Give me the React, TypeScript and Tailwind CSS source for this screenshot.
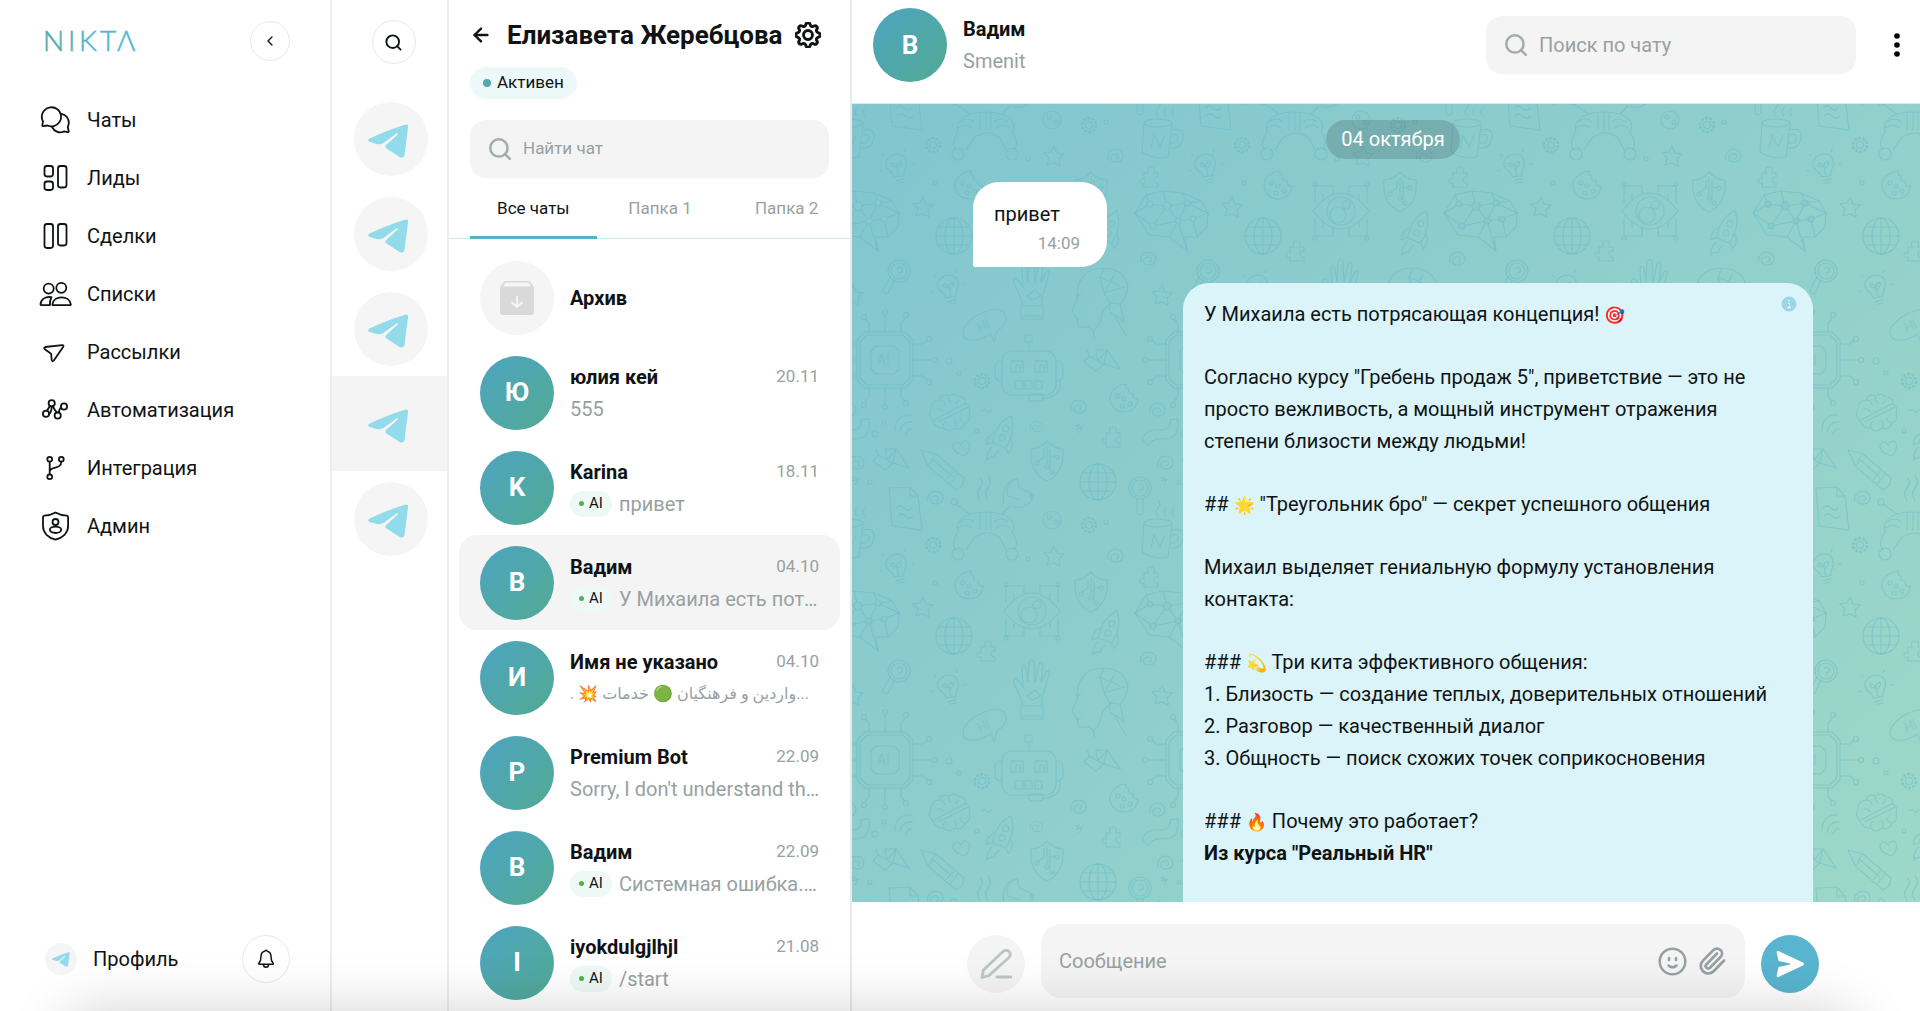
import type { ReactNode } from "react";
import { ArrowLeft, ChevronLeft, Paperclip, Search } from "lucide-react";
import { BsGear } from "react-icons/bs";

interface Chat {
  name: string;
  letter: string;
  date: string;
  text: string;
  ai?: boolean;
  active?: boolean;
  arabic?: boolean;
}

const CHATS: Chat[] = [
  { name: "юлия кей", letter: "Ю", date: "20.11", text: "555" },
  { name: "Karina", letter: "K", date: "18.11", text: "привет", ai: true },
  {
    name: "Вадим",
    letter: "В",
    date: "04.10",
    text: "У Михаила есть пот…",
    ai: true,
    active: true,
  },
  {
    name: "Имя не указано",
    letter: "И",
    date: "04.10",
    text: ". 💥 واردین و فرهنگیان 🟢 خدمات...",
    arabic: true,
  },
  {
    name: "Premium Bot",
    letter: "P",
    date: "22.09",
    text: "Sorry, I don't understand th…",
  },
  {
    name: "Вадим",
    letter: "В",
    date: "22.09",
    text: "Системная ошибка.…",
    ai: true,
  },
  { name: "iyokdulgjlhjl", letter: "I", date: "21.08", text: "/start", ai: true },
];

const CHANNELS = [
  { id: 1, active: false },
  { id: 2, active: false },
  { id: 3, active: false },
  { id: 4, active: true },
  { id: 5, active: false },
];

const TABS = ["Все чаты", "Папка 1", "Папка 2"];

function NavSvg({ children }: { children: ReactNode }) {
  return (
    <svg
      viewBox="0 0 30 30"
      className="h-[30px] w-[30px] overflow-visible"
      fill="none"
      stroke="currentColor"
      strokeWidth="1.8"
      strokeLinecap="round"
      strokeLinejoin="round"
      aria-hidden="true"
    >
      {children}
    </svg>
  );
}

const NAV = [
  {
    label: "Чаты",
    icon: (
      <NavSvg>
        <path d="M3.200 21.200C2.200 21.200 2 20.500 2.400 19.500L3 16.500C1.200 13 1.500 9 3.800 6 7 2 13 1 17 4 21.500 7 22.300 13 19.500 17 16.500 21.300 11.500 22.300 7.500 20.500z" />
        <path d="M21.500 8.800C26 9.500 29 13.500 28.800 18 28.700 20 28 21.300 27.800 22.200L28.700 26.200C28.800 27 28.300 27.400 27.500 27.200L24.300 26.400C19.500 28.500 14.500 27 12 22" />
      </NavSvg>
    ),
  },
  {
    label: "Лиды",
    icon: (
      <NavSvg>
        <rect x="4.5" y="3" width="8.5" height="10.5" rx="2.4" />
        <rect x="4.5" y="18.5" width="8.5" height="8.5" rx="2.4" />
        <rect x="18" y="3" width="8.5" height="21.5" rx="2.4" />
      </NavSvg>
    ),
  },
  {
    label: "Сделки",
    icon: (
      <NavSvg>
        <rect x="4.5" y="3" width="8.5" height="24" rx="2.4" />
        <rect x="18" y="3" width="8.5" height="21.5" rx="2.4" />
      </NavSvg>
    ),
  },
  {
    label: "Списки",
    icon: (
      <NavSvg>
        <circle cx="8.7" cy="9.6" r="5" />
        <circle cx="21.3" cy="8.8" r="5" />
        <path d="M11.5 18.2C5 17.2.6 20.6.5 25.4q0 .8.8.8h8.6c-.2-3 .2-5.600 1.600-8z" />
        <path d="M13.200 26.200h16.800q.9 0 .8-.9c-.6-4.300-4.500-7-9.200-7s-8.600 2.700-9.200 7q-.1.9.8.9z" />
      </NavSvg>
    ),
  },
  {
    label: "Рассылки",
    icon: (
      <NavSvg>
        <path d="M5.200 10 22.200 8.200q2-.1.9 1.700l-9.300 13.600q-1.600 1.800-2.100-.6l-.6-6.200-5.900-4.200q-2-2 0-2.500z" />
      </NavSvg>
    ),
  },
  {
    label: "Автоматизация",
    icon: (
      <NavSvg>
        <circle cx="6" cy="18.700" r="3.100" />
        <circle cx="11.700" cy="8.300" r="3.100" />
        <circle cx="17.700" cy="20.500" r="3.100" />
        <circle cx="24" cy="11.500" r="3.100" />
        <path d="M7 15.700 9.800 11M12.800 11.300 15 15.300q1.200 1 1.900 2.300M18.600 17.400q1.500-4.800 2.600-4.900M9 19q2.500-1 2.600-7.500" />
      </NavSvg>
    ),
  },
  {
    label: "Интеграция",
    icon: (
      <NavSvg>
        <circle cx="9.700" cy="6.300" r="2.400" />
        <circle cx="21.300" cy="6.300" r="2.400" />
        <circle cx="9.700" cy="23.800" r="2.400" />
        <path d="M9.700 8.700v12.700M21.300 8.700c0 8-11.600 4.500-11.600 9.800" />
      </NavSvg>
    ),
  },
  {
    label: "Админ",
    icon: (
      <NavSvg>
        <path d="M15.500 1.500c3.500 2 7.500 3 11.300 3.200q1.200.1 1.300 1.400v9c0 7-5.500 11.700-12.600 13.500C8.400 26.800 3 22.100 3 15.100v-9q0-1.300 1.300-1.400C8 4.500 12 3.500 15.500 1.500z" />
        <circle cx="15.500" cy="11" r="3" />
        <ellipse cx="15.500" cy="18.800" rx="5.700" ry="3.200" />
      </NavSvg>
    ),
  },
];

function TelegramIcon({ className }: { className: string }) {
  return (
    <svg viewBox="0 -1 122 102" className={className} fill="#92dbeb" aria-hidden="true">
      <path d="M3 43Q-3 48 3 52L25 59Q36 62 46 56L86 27Q92 25 88 31L54 62Q49 67 54 72L93 97Q106 104 109 92L120 6Q121-2 110 1Q50 20 3 43z" />
    </svg>
  );
}

function Avatar({ letter }: { letter: string }) {
  return (
    <div className="flex h-[74px] w-[74px] shrink-0 items-center justify-center rounded-full bg-linear-135 from-[#4ea4c0] to-[#52aa94] text-[26px] font-bold text-white">
      {letter}
    </div>
  );
}

function ChatRow({ chat }: { chat: Chat }) {
  return (
    <li>
      <button
        type="button"
        className={`flex h-[95px] w-full items-center gap-4 rounded-[18px] pr-4 pl-[21px] text-left ${chat.active ? "bg-[#f4f4f4]" : ""}`}
      >
        <Avatar letter={chat.letter} />
        <span className="flex min-w-0 flex-1 flex-col">
          <span className="flex h-8 items-center justify-between pr-[5px]">
            <span className="text-[20px] font-bold text-[#101314]">{chat.name}</span>
            <span className="text-[17px] text-[#98a1a2]">{chat.date}</span>
          </span>
          <span className="flex h-8 items-center gap-[7px]">
            {chat.ai && (
              <span className="flex h-[26px] shrink-0 items-center gap-[5px] rounded-full bg-[#edf8f7] px-[9px] text-[15px] text-[#101314]">
                <span className="h-[5px] w-[5px] rounded-full bg-[#4fb447]" />
                AI
              </span>
            )}
            <span
              className={`min-w-0 flex-1 truncate text-[#98a1a2] ${chat.arabic ? "text-[16px]" : "text-[20px]"}`}
            >
              {chat.text}
            </span>
          </span>
        </span>
      </button>
    </li>
  );
}

const STAR = "M0-10 3-3 10-2 5 3 6 10 0 7-7 9-5 2-10-3-3-4z";
const PUZZLE = "M-7-4h4q-2-6 3-6t3 6h4v4q-4 0-4 3t4 3v4H-7V6q-4 1-4-2t4-2z";
const SWIRL = "M-7 5C-9-3-2-8 4-5s5 12-3 12S-5-1 0-1s4 5 1 5";
const CLOUD = "M-18 2-13-4-4 1 5-10 18 9 2 4-6 11zM-13-4-15-10M-4 1-6-10 5-10M-4 1 2 4 5-10";

function Globe({ x, y }: { x: number; y: number }) {
  return (
    <g transform={`translate(${x} ${y})`}>
      <circle r="18" />
      <ellipse rx="9" ry="18" />
      <path d="M-18 0H18M0-18V18M-15-9H15M-15 9H15" />
    </g>
  );
}

function Cookie({ x, y }: { x: number; y: number }) {
  return (
    <g transform={`translate(${x} ${y})`}>
      <path d="M2-14Q-3-14-7-11-15-6-14 2-11 14 1 14 13 13 14 1 9 2 9-4 3-4 5-9 1-10 2-14z" />
      <circle cx="-6" cy="-2" r="2" />
      <circle cx="0" cy="1" r="2" />
      <circle cx="-2" cy="8" r="2" />
      <circle cx="6" cy="6" r="2" />
    </g>
  );
}

function Rocket({ x, y }: { x: number; y: number }) {
  return (
    <g transform={`translate(${x} ${y}) rotate(22)`}>
      <path d="M-7 8Q-11-12 0-24 11-12 7 8zM-6 12q-3 6 0 14 2-5 6-5-1-4 2-9M-8-3Q-15 3-12 12L-7 8M8-3Q15 3 12 12L7 8" />
      <circle cy="-10" r="3" />
      <circle cy="0" r="3" />
    </g>
  );
}

function Bulb({ x, y }: { x: number; y: number }) {
  return (
    <g transform={`translate(${x} ${y}) rotate(-12)`}>
      <path d="M-5 9Q-5 5-9 1-13-7-6-11 1-15 8-10 13-3 7 4 5 7 5 10zM-4 13H5M-3 16H4M0 9V0Q-8-2-4-5-1-4 0 0 1-5 5-5 6-1 0 2M-18 0h3M18 0h-3M-12-16l2 3M12-16l-2 3" />
    </g>
  );
}

function Shield({ x, y }: { x: number; y: number }) {
  return (
    <g transform={`translate(${x} ${y})`}>
      <path d="M0-20Q-7-12-16-12-18 12 0 20 18 12 16-12 7-12 0-20zM0-14V3M-3-12V-4L-9 0M3-12V8M3-4 9-5" />
      <circle cx="-10" cy="2" r="2" />
      <circle cx="10" cy="-4" r="2" />
      <circle cx="5" cy="11" r="2" />
      <circle cx="0" cy="6" r="2" />
    </g>
  );
}

function Cog({ x, y }: { x: number; y: number }) {
  return (
    <g transform={`translate(${x} ${y})`}>
      <circle r="3.500" />
      <circle r="7" strokeDasharray="3 1.400" strokeWidth="2.500" />
    </g>
  );
}

// one repeat of the doodle wallpaper, 309 x 400
function WallpaperTile() {
  return (
    <g>
      <g transform="translate(10 117)">
        <path d="M-36-8-25-26-8-30 12-28 30-20 37-8 36 6 26 16H14L16 30-2 16-22 14z" />
        <path d="M-36-8-21-17-4-15 16-18 37-8 22-2 7 0-18 5-36-8M-25-26-21-17M-8-30-4-15 7 0 16-18M-18 5-4-15M22-2 26 16M7 0-2 16M7 0 16 30M12-28 16-18 30-20" />
        <circle cx="-21" cy="-17" r="3" fill="#88c9cd" />
        <circle cx="-4" cy="-15" r="4" fill="#88c9cd" />
        <circle cx="16" cy="-18" r="3" fill="#88c9cd" />
        <circle cx="7" cy="0" r="3" fill="#88c9cd" />
        <circle cx="22" cy="-2" r="3" fill="#88c9cd" />
        <circle cx="-18" cy="5" r="3" fill="#88c9cd" />
      </g>
      <path d={STAR} transform="translate(71 103)" />
      <path d={STAR} transform="translate(1 191)" />
      <path d={STAR} transform="translate(202 52)" />
      <Globe x={102} y={132} />
      <Globe x={246} y={378} />
      {/* circuit eye */}
      <g transform="translate(180 107)">
        <path d="M-28 0Q0-36 28 0 0 36-28 0zM-26-8V-25H-8V-17M26-8V-25H8V-17M-26 8V25H-8V17M26 8V25H8V17M-18-10V-17M18-10V-17M-18 10V17M18 10V17" />
        <circle r="14" />
        <circle cx="-3" cy="4" r="8" />
        <circle cx="5" cy="-6" r="4" />
        <circle cx="-26" cy="-27" r="2" />
        <circle cx="26" cy="-27" r="2" />
        <circle cx="-26" cy="27" r="2" />
        <circle cx="26" cy="27" r="2" />
      </g>
      <Shield x={239} y={88} />
      <Shield x={195} y={357} />
      <Rocket x={256} y={129} />
      <Rocket x={150} y={334} />
      <path d={PUZZLE} transform="translate(136 147)" />
      <path d={PUZZLE} transform="translate(261 333)" />
      <path d={PUZZLE} transform="translate(299 73)" />
      {/* magnifiers */}
      <circle cx="47" cy="167" r="11" />
      <circle cx="47" cy="167" r="8" />
      <path d="M42 177 36 189Q31 191 31 186L38 173M45 165q3-4 5 0t-4 4" />
      <circle cx="288" cy="384" r="11" />
      <circle cx="288" cy="384" r="8" />
      <path d="M285 395V409Q288 413 291 409V395M286 382q3-4 5 0t-4 4" />
      <Bulb x={97} y={184} />
      <Bulb x={45} y={63} />
      {/* robot hand */}
      <g transform="translate(180 186)">
        <path d="M-11 29V16Q-9 12-12 6L-18-6Q-20-12-15-11L-9-3-10-22Q-8-27-6-22L-4-8-3-28Q0-33 2-28L3-8 7-26Q10-30 11-25L9-7 14-18Q18-21 17-16L12 2Q8 12 11 16V29zM-11 16H11M-11 26H11M-5 6 3 0 9 6 0 10z" />
      </g>
      {/* android head */}
      <g transform="translate(248 199)">
        <path d="M-6 35Q-4 27-12 24-24 26-22 17L-28 8-23-3Q-24-35 4-35 24-34 28-17 26-3 20 1L24 20Q18 12 12 11M4-35 0-26 20-17M0-26 4-10 28-17M-24-8h5M-24 16h5M-6 28Q2 18 2 10L10 0 20 1M10 0 4-10 14-28M14 11l12 22M10 0Q8 8 12 11" />
      </g>
      <path d={SWIRL} transform="translate(296 154)" />
      <path d={SWIRL} transform="translate(184 322) scale(.8)" />
      <path d={SWIRL} transform="translate(226 302)" />
      <path d={SWIRL} transform="translate(305 305)" />
      <path d={SWIRL} transform="translate(313 358)" />
      <path d={SWIRL} transform="translate(83 393)" />
      <path d={SWIRL} transform="translate(263 51)" />
      {/* chip */}
      <g transform="translate(33 256)">
        <path d="M-20-28H20L28-20V20L20 28H-20L-28 20V-20zM-18-25H18L25-18V18L18 25H-18L-25 18V-18z" />
        <path d="M-9-14H9L14-9V9L9 14H-9L-14 9V-9z" />
        <path d="M0-28V-45M-16-28V-37L-20-41M16-28V-37L20-41M0 28V45M-16 28V37L-20 41M16 28V37L20 41M28 0H46M28-16H38L42-20M28 16H38L42 20M-28 0H-46M-28-16H-38L-42-20M-28 16H-38L-42 20" />
        <circle cy="-48" r="2.500" />
        <circle cx="-21" cy="-43" r="2.500" />
        <circle cx="21" cy="-45" r="2.500" />
        <circle cy="47" r="2.500" />
        <circle cx="-21" cy="45" r="2.500" />
        <circle cx="21" cy="43" r="2.500" />
        <circle cx="49" cy="0" r="2.500" />
        <circle cx="44" cy="-21" r="2.500" />
        <circle cx="44" cy="22" r="2.500" />
        <circle cx="-49" cy="0" r="2.500" />
        <circle cx="-44" cy="-21" r="2.500" />
        <circle cx="-44" cy="22" r="2.500" />
        <text x="-8" y="5" fontSize="14" fontFamily="Roboto, sans-serif" strokeWidth=".6">
          AI
        </text>
      </g>
      {/* speech bubble */}
      <g transform="translate(132 221)">
        <path d="M10 17 7 9Q-12 20-20 12-24 2-8-9 12-20 20-13 26-2 13 6z" />
        <text
          x="-7"
          y="5"
          fontSize="13"
          fontFamily="Roboto, sans-serif"
          strokeWidth=".6"
          transform="rotate(-24)"
        >
          Hi
        </text>
      </g>
      {/* robot face */}
      <g transform="translate(177 269)">
        <rect x="-27" y="-22" width="54" height="44" rx="10" />
        <path d="M0-22V-31M-4-31h7v-7h-7zM-27-12q-7 0-7 6V2q0 6 7 6M27-12q7 0 7 6V2q0 6-7 6M31 7V14Q30 24 14 25M-18-12h12v11h-12zM6-12h12v11H6zM-13-2v-6h4v6M11-2v-6h4v6M-14 8h8v8h-8zM-4 8h7v8h-7zM6 8h7v8H6z" />
        <rect x="0" y="21" width="14" height="7" rx="3" />
      </g>
      <path d={CLOUD} transform="translate(250 256)" />
      <path d={CLOUD} transform="translate(39 355)" />
      <Cog x={130} y={277} />
      <Cog x={81} y={41} />
      <Cog x={237} y={21} />
      {/* brain */}
      <g transform="translate(98 308)">
        <path d="M-17 9Q-23 3-19-3-19-11-11-12-9-19-1-16 4-20 9-15 16-15 16-8 21-6 19 1 22 8 15 11 12 19 5 16-2 22-6 16-14 17-17 9zM-16 8 16-9M-12 10 18-5M-11-12q5 0 6 5M-1-16q-2 4 2 7M-14-2q5-3 7 2M5-8q4-2 3-5M-6 16q-2-4 2-7M5 16q3-4-1-8M15 11q-4 0-5-5" />
      </g>
      <path d="M43 327Q43 310 60 311M48 329Q49 317 61 318M54 331Q55 324 61 325M130 307q3-3 5 0t5-2" />
      <Cookie x={272} y={294} />
      <Cookie x={117} y={81} />
      {/* tube */}
      <path d="M290 335Q294 324 310 326 319 326 318 316L326 315Q328 334 314 335 300 333 296 342z" />
      {/* heart */}
      <path d="M112 352Q100 348 101 341 105 335 109 341 113 334 117 339 119 347 112 352z" />
      {/* pencil */}
      <path d="M69 346 84 350 112 374Q112 383 104 386L76 362zM84 350 80 355 79 359 76 362M106 370 98 380M102 366 94 376M80 355 101 373" />
      <path d="M223 322l4-1-2 4 5-2-3 6M308 374l4-1-2 4 5-2-3 6M128 396q-5-6 0-12t0-10M136 396q-5-6 0-12t0-12M306 12q-4-4 0-8t0-8M314 12q-4-4 0-8M322 12q-4-4 0-8" />
      {/* note */}
      <path d="M37-16 58-17 66-8 70 26 40 22zM58-17V-8H66M44 4q4-4 8 0t8 0M45 12q4-4 8 0t8 0" />
      {/* robot dog */}
      <g transform="translate(132 16)">
        <path d="M-28-16 -14-6Q0-10 18-6L26-14M-14-6Q-30 0-26 12-34 24-28 30M-10 18Q4 8 16 18M18-6Q34 0 28 12 36 24 30 30M-10 18-18 30M16 18 22 30M-4-8v18M2-8v18M7-8v18M-26 8q8-6 14 0M-24 2q8-6 14 0M26 8q-8-6-14 0M24 2q-8-6-14 0" />
        <path d="M20-16Q16-38 34-42 32-32 40-30 50-28 48-20 40-10 28-14M34-42Q20-36 24-24L36-20" />
        <circle cx="-30" cy="-18" r="3" />
        <circle cx="-26" cy="34" r="6" />
        <circle cx="28" cy="34" r="6" />
        <circle cx="48" cy="-24" r="2" />
      </g>
      {/* mug */}
      <g transform="translate(308 36)">
        <ellipse cx="-2" cy="-17" rx="14" ry="4" />
        <path d="M-16-17-18 12Q-6 20 8 17L12-15M12-10Q25-13 23-1 20 10 9 8M12-5Q19-7 18-1 17 4 10 3M-9 8-6-5 0 7 5-5" />
      </g>
      <circle cx="200" cy="16" r="9" />
      <circle cx="197" cy="13" r="2" />
      <circle cx="204" cy="18" r="2" />
      <circle cx="97" cy="257" r="3" />
      <circle cx="107" cy="269" r="2" />
      <circle cx="125" cy="327" r="2" />
      <circle cx="32" cy="318" r="2" />
      <circle cx="23" cy="330" r="3" />
      <circle cx="18" cy="378" r="2" />
      <circle cx="176" cy="55" r="2" />
      <circle cx="254" cy="18" r="2" />
      <circle cx="83" cy="79" r="2" />
    </g>
  );
}

function Wallpaper() {
  return (
    <svg className="absolute inset-0 h-full w-full" aria-hidden="true">
      <defs>
        <pattern id="doodles" width="309" height="400" patternUnits="userSpaceOnUse">
          <g fill="none" stroke="#5fb3c2" strokeWidth="1.200" strokeOpacity=".38">
            <WallpaperTile />
            {/* neighbours, so that shapes run over the tile edge */}
            <g transform="translate(309 0)">
              <WallpaperTile />
            </g>
            <g transform="translate(-309 0)">
              <WallpaperTile />
            </g>
            <g transform="translate(0 400)">
              <WallpaperTile />
            </g>
            <g transform="translate(0 -400)">
              <WallpaperTile />
            </g>
          </g>
        </pattern>
      </defs>
      <rect width="100%" height="100%" fill="url(#doodles)" />
    </svg>
  );
}

function Sidebar() {
  return (
    <aside className="flex w-[332px] shrink-0 flex-col border-r-2 border-[#ededed] pr-10">
      <div className="flex h-[91px] items-center justify-between pb-[10px] pl-[45px]">
        <a href="#" aria-label="NIKTA">
          <svg width="96" height="32" viewBox="0 -4 96 32" className="overflow-visible">
            <defs>
              <linearGradient id="brand" gradientUnits="userSpaceOnUse" x1="0" x2="50">
                <stop stopColor="#52ab9c" />
                <stop offset="1" stopColor="#4db6d3" />
              </linearGradient>
            </defs>
            <text
              x="-2 23 34 55 72"
              y="22"
              fill="url(#brand)"
              stroke="url(#brand)"
              strokeWidth=".5"
              fontFamily="Lato, sans-serif"
              fontWeight="300"
              fontSize="28"
            >
              NIKTΛ
            </text>
          </svg>
        </a>
        <button
          type="button"
          aria-label="Свернуть меню"
          className="flex h-10 w-10 items-center justify-center rounded-full border border-[#e9e9e9]"
        >
          <ChevronLeft className="h-4 w-4" />
        </button>
      </div>
      <nav className="flex flex-col pl-10">
        {NAV.map((item) => (
          <a key={item.label} href="#" className="flex h-[58px] items-center gap-[17px]">
            <span className="flex h-[30px] w-[30px] items-center justify-center">{item.icon}</span>
            <span className="text-[20px]">{item.label}</span>
          </a>
        ))}
      </nav>
      <div className="mt-auto mb-7 flex items-center justify-between pl-[45px]">
        <a href="#" className="flex items-center gap-4">
          <span className="flex h-8 w-8 items-center justify-center rounded-full bg-[#f5f5f5]">
            <TelegramIcon className="h-[15px] w-[18px]" />
          </span>
          <span className="text-[20px]">Профиль</span>
        </a>
        <button
          type="button"
          aria-label="Уведомления"
          className="flex h-12 w-12 items-center justify-center rounded-full border border-[#e9e9e9]"
        >
          <svg
            viewBox="0 0 18 20"
            className="h-5 w-[18px]"
            fill="none"
            stroke="currentColor"
            strokeWidth="1.500"
            strokeLinecap="round"
            strokeLinejoin="round"
          >
            <path d="M9 1.200c-.8 0-1 .8-1.300 1C5 2.800 4 5 4 7.500c0 3.500-.5 5-2 6.500-.6.700-.4 1.200.4 1.200h13.200c.8 0 1-.5.4-1.200-1.500-1.500-2-3-2-6.500 0-2.500-1-4.700-3.700-5.300-.3-.2-.5-1-1.300-1zM6.500 15.500c0 3.800 5 3.800 5 0" />
          </svg>
        </button>
      </div>
    </aside>
  );
}

function ChannelRail() {
  return (
    <div className="w-[117px] shrink-0 border-r-2 border-[#ededed]">
      <div className="flex h-[91px] items-center justify-center pb-[7px] pl-2">
        <button
          type="button"
          aria-label="Поиск"
          className="flex h-11 w-11 items-center justify-center rounded-full border border-[#e9e9e9]"
        >
          <Search className="h-[19px] w-[19px]" strokeWidth={2.4} />
        </button>
      </div>
      {CHANNELS.map((c) => (
        <button
          key={c.id}
          type="button"
          aria-label={`Telegram ${c.id}`}
          className={`flex h-[95px] w-full items-center justify-center pl-[3px] ${c.active ? "bg-[#f4f4f4]" : ""}`}
        >
          <span
            className={`flex h-[74px] w-[74px] items-center justify-center rounded-full pt-1 pr-[6px] ${c.active ? "" : "bg-[#f5f5f5]"}`}
          >
            <TelegramIcon className="h-[34px] w-[41px]" />
          </span>
        </button>
      ))}
    </div>
  );
}

function ChatList() {
  return (
    <section className="flex w-[403px] shrink-0 flex-col overflow-hidden border-r-2 border-[#e9e9e9]">
      <div className="flex h-[70px] shrink-0 items-center px-[21px]">
        <button type="button" aria-label="Назад" className="w-[37px] shrink-0">
          <ArrowLeft className="h-[22px] w-[22px]" strokeWidth={2.6} />
        </button>
        <h1 className="text-[26px] font-bold whitespace-nowrap">Елизавета Жеребцова</h1>
        <button type="button" aria-label="Настройки" className="ml-3 shrink-0">
          <BsGear className="h-[26px] w-[26px]" strokeWidth=".8" />
        </button>
      </div>
      <div className="px-[21px]">
        <span className="-mt-[3px] flex h-8 w-fit items-center gap-[6px] rounded-full bg-[#edf9f8] px-[13px] text-[17px]">
          <span className="h-2 w-2 rounded-full bg-[#52a9ae]" />
          Активен
        </span>
        <label className="mt-[21px] flex h-[58px] items-center gap-[10px] rounded-2xl bg-[#f4f4f4] px-[17px]">
          <Search className="h-[26px] w-[26px] shrink-0 text-[#a3adae]" strokeWidth={2.3} />
          <input
            aria-label="Найти чат"
            placeholder="Найти чат"
            className="w-full min-w-0 bg-transparent text-[17px] outline-none placeholder:text-[#98a1a2]"
          />
        </label>
      </div>
      <div className="flex h-[61px] shrink-0 border-b border-[#cfeaf0] pl-[21px]" role="tablist">
        {TABS.map((tab, i) => (
          <button
            key={tab}
            type="button"
            role="tab"
            aria-selected={i === 0}
            className={`-mb-px flex-1 border-b-[3px] pt-[3px] text-[17px] ${i === 0 ? "border-[#58b2c7] text-[#101314]" : "border-transparent text-[#98a1a2]"}`}
          >
            {tab}
          </button>
        ))}
      </div>
      <ul className="px-[10px] pt-[11px]">
        <li>
          <button
            type="button"
            className="flex h-[95px] w-full items-center gap-4 px-[21px] text-left"
          >
            <span className="flex h-[74px] w-[74px] items-center justify-center rounded-full bg-[#f5f5f5]">
              <svg viewBox="0 0 34 34" className="h-[34px] w-[34px]" aria-hidden="true">
                <path d="M4.500 0h25L34 6v25q0 3-3 3H3q-3 0-3-3V6z" fill="#d9d9d9" />
                <path d="M5.500 1.500h23l2.500 4H3z" fill="#f1f6f6" />
                <path
                  d="M17 15v10.500M11.500 21l5.500 5 5.500-5"
                  fill="none"
                  stroke="#f5f5f5"
                  strokeWidth="2"
                />
              </svg>
            </span>
            <span className="text-[20px] font-bold text-[#101314]">Архив</span>
          </button>
        </li>
        {CHATS.map((chat) => (
          <ChatRow key={chat.date + chat.name} chat={chat} />
        ))}
      </ul>
    </section>
  );
}

// leading-none keeps the emoji font from stretching its line
function Emoji({ children }: { children: ReactNode }) {
  return <span className="text-[17px] leading-none">{children}</span>;
}

function Conversation() {
  return (
    <main className="flex min-w-0 flex-1 flex-col">
      <header className="flex h-[104px] shrink-0 items-center gap-4 border-b border-[#d9eaec] pr-[11px] pb-[13px] pl-[21px]">
        <Avatar letter="В" />
        <div className="flex-1">
          <div className="text-[20px] leading-8 font-bold">Вадим</div>
          <div className="text-[20px] leading-8 text-[#98a1a2]">Smenit</div>
        </div>
        <label className="flex h-[58px] w-[370px] items-center gap-[10px] rounded-2xl bg-[#f4f4f4] px-[17px]">
          <Search className="h-[26px] w-[26px] shrink-0 text-[#a3adae]" strokeWidth={2.3} />
          <input
            aria-label="Поиск по чату"
            placeholder="Поиск по чату"
            className="w-full min-w-0 bg-transparent text-[20px] outline-none placeholder:text-[#98a1a2]"
          />
        </label>
        <button type="button" aria-label="Меню" className="ml-[13px]">
          <svg viewBox="0 0 24 24" className="h-6 w-6" fill="#000">
            <circle cx="12" cy="3" r="2.800" />
            <circle cx="12" cy="12" r="2.800" />
            <circle cx="12" cy="21" r="2.800" />
          </svg>
        </button>
      </header>

      <div className="relative min-h-0 flex-1 overflow-hidden bg-linear-135 from-[#82c5cf] to-[#9dd8c8]">
        <Wallpaper />
        <div className="relative mr-[107px] ml-[121px] flex flex-col pt-4">
          <div className="self-center rounded-full bg-black/14 px-[15px] text-[20px] leading-[39px] text-white">
            04 октября
          </div>
          <div className="mt-[23px] flex w-[134px] flex-col self-start rounded-[26px] rounded-bl-[2px] bg-white pt-4 pr-[27px] pb-[10px] pl-[21px]">
            <p className="text-[20px] leading-8">привет</p>
            <time className="self-end text-[17px] leading-[27px] text-[#98a1a2]">14:09</time>
          </div>
          <div className="relative mt-4 flex h-[760px] w-[630px] flex-col gap-[31px] self-end rounded-[26px] bg-[#daf4f9] px-[21px] pt-[15px] text-[20px] leading-8 text-[#101314]">
            <svg viewBox="0 0 16 16" className="absolute top-[13px] right-4 h-4 w-4" role="img">
              <circle cx="8" cy="8" r="7.500" fill="#9ad6e5" />
              <path d="M8 4v1.500M6.500 7.500H8v4M6 11.500h4" stroke="#daf4f9" strokeWidth="1.500" />
            </svg>
            <p>
              У Михаила есть потрясающая концепция! <Emoji>🎯</Emoji>
            </p>
            <p>
              Согласно курсу "Гребень продаж 5", приветствие — это не
              <br />
              просто вежливость, а мощный инструмент отражения
              <br />
              степени близости между людьми!
            </p>
            <p>
              ## <Emoji>🌟</Emoji> "Треугольник бро" — секрет успешного общения
            </p>
            <p>
              Михаил выделяет гениальную формулу установления
              <br />
              контакта:
            </p>
            <p>
              ### <Emoji>💫</Emoji> Три кита эффективного общения:
              <br />
              1. Близость — создание теплых, доверительных отношений
              <br />
              2. Разговор — качественный диалог
              <br />
              3. Общность — поиск схожих точек соприкосновения
            </p>
            <p>
              ### <Emoji>🔥</Emoji> Почему это работает?
              <br />
              <b>Из курса "Реальный HR"</b>
            </p>
          </div>
        </div>
      </div>

      <footer className="flex h-[109px] shrink-0 items-center gap-4 pt-[9px] pr-[101px] pl-[115px]">
        <button
          type="button"
          aria-label="Редактировать"
          className="mt-[6px] flex h-[58px] w-[58px] shrink-0 items-center justify-center rounded-full bg-[#f4f4f4]"
        >
          <svg
            viewBox="0 0 32 32"
            className="h-8 w-8"
            fill="none"
            stroke="#bcc4c5"
            strokeWidth="2.800"
            strokeLinecap="round"
            strokeLinejoin="round"
          >
            <path d="M2 29.500 3.500 22 23 3.500q3.500-2.500 6 0t0 6L9 27.500zM17 29h14" />
          </svg>
        </button>
        <div className="flex h-[74px] flex-1 items-center gap-[10px] rounded-[20px] bg-[#f4f4f4] pr-[18px] pl-[18px]">
          <input
            aria-label="Сообщение"
            placeholder="Сообщение"
            className="min-w-0 flex-1 bg-transparent text-[20px] outline-none placeholder:text-[#98a1a2]"
          />
          <button type="button" aria-label="Эмодзи">
            <svg
              viewBox="0 0 29 29"
              className="h-[29px] w-[29px]"
              fill="none"
              stroke="#98a1a2"
              strokeWidth="2.500"
              strokeLinecap="round"
            >
              <circle cx="14.500" cy="14.500" r="12.800" />
              <path d="M11 11v2M18 11v2M10.500 18.500q4 3.600 8 0" />
            </svg>
          </button>
          <button type="button" aria-label="Прикрепить файл">
            <Paperclip className="h-[30px] w-[30px] text-[#98a1a2]" strokeWidth={2.2} />
          </button>
        </div>
        <button
          type="button"
          aria-label="Отправить"
          className="mt-[6px] flex h-[58px] w-[58px] shrink-0 items-center justify-center rounded-full bg-[#58b4cf]"
        >
          <svg viewBox="0 0 28 28" className="h-7 w-7" fill="#fff">
            <path d="M.5 2Q.8.500 2.500 1L27 12.500q2 1.500 0 3L2.500 27Q.8 27.500.500 26L2.500 17 14 14.500v-1L2.500 11z" />
          </svg>
        </button>
      </footer>
    </main>
  );
}

export default function App() {
  return (
    <div className="relative flex h-screen overflow-hidden bg-white font-[Roboto,'DejaVu_Sans',sans-serif] text-[#101314]">
      <Sidebar />
      <ChannelRail />
      <ChatList />
      <Conversation />
      {/* soft shade along the lower edge of the window */}
      <div className="pointer-events-none absolute top-full right-[60px] left-[60px] h-40 rounded-[40px] shadow-[0_0_56px_rgba(0,0,0,0.18)]" />
    </div>
  );
}
